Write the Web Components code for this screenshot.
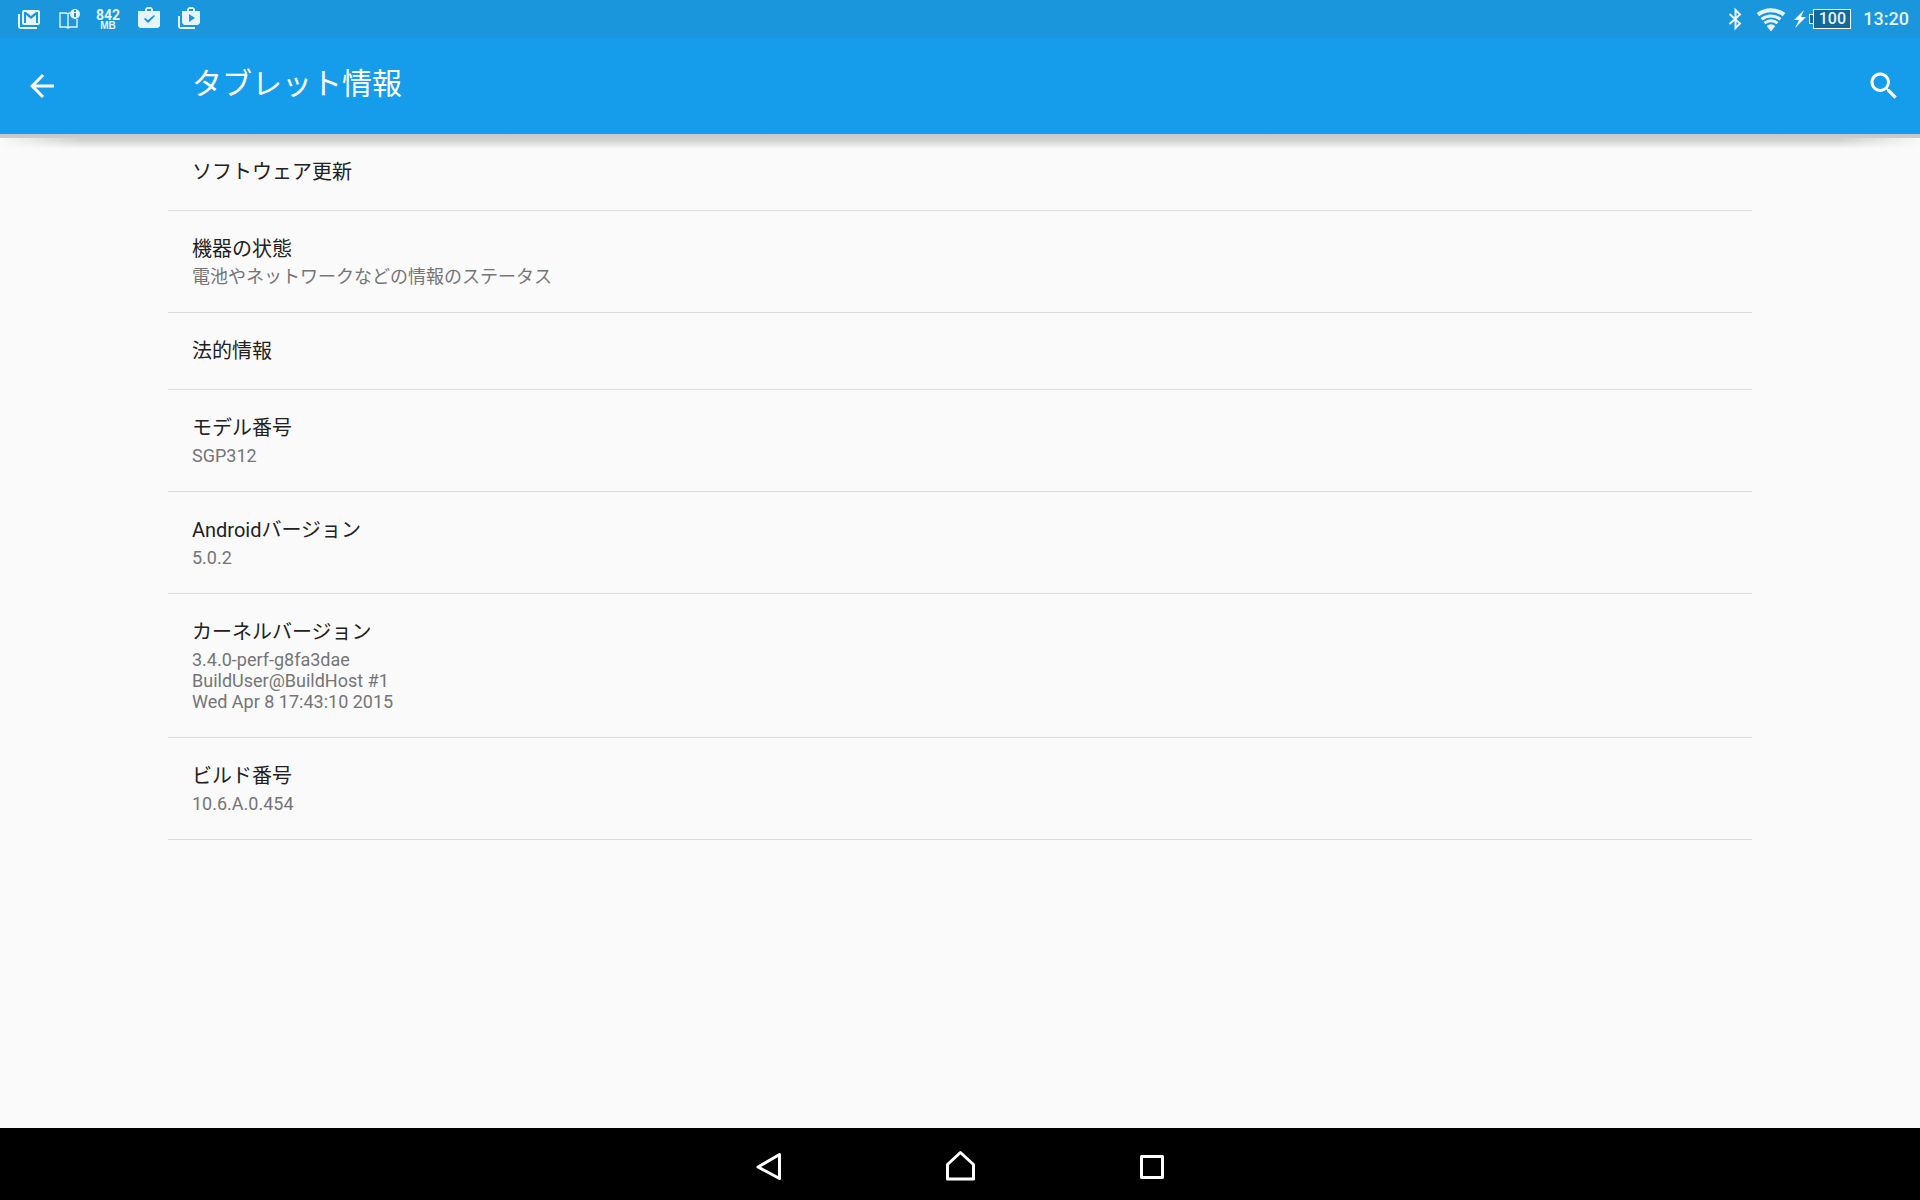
<!DOCTYPE html>
<html lang="ja">
<head>
<meta charset="utf-8">
<meta name="viewport" content="width=device-width, initial-scale=1">
<title>タブレット情報</title>
<style>
    body {
        margin: 0;
        background: #fafafa;
        font-family: Roboto, "Noto Sans CJK JP", sans-serif;
    }
</style>
</head>
<body>
<about-screen>
    <status-bar slot="status" time="13:20" battery="100" traffic="842"></status-bar>
    <app-bar slot="header">タブレット情報</app-bar>

    <setting-row>ソフトウェア更新</setting-row>
    <setting-row>機器の状態<span slot="summary">電池やネットワークなどの情報のステータス</span></setting-row>
    <setting-row>法的情報</setting-row>
    <setting-row>モデル番号<span slot="summary">SGP312</span></setting-row>
    <setting-row>Androidバージョン<span slot="summary">5.0.2</span></setting-row>
    <setting-row>カーネルバージョン<span slot="summary">3.4.0-perf-g8fa3dae<br>BuildUser@BuildHost #1<br>Wed Apr 8 17:43:10 2015</span></setting-row>
    <setting-row>ビルド番号<span slot="summary">10.6.A.0.454</span></setting-row>

    <nav-bar slot="nav"></nav-bar>
</about-screen>

<script>
function makeTemplate(html) {
    const template = document.createElement("template");
    template.innerHTML = html;
    return template;
}

const screenTemplate = makeTemplate(`
    <style>
        :host {
            display: flex;
            flex-direction: column;
            min-height: 100vh;
        }

        main {
            flex: 1;
            padding: 0 168px;
        }
    </style>

    <slot name="status"></slot>
    <slot name="header"></slot>
    <main><slot></slot></main>
    <slot name="nav"></slot>
`);

class AboutScreen extends HTMLElement {
    constructor() {
        super();
        this.attachShadow({ mode: "open" });
        this.shadowRoot.appendChild(screenTemplate.content.cloneNode(true));
    }
}

const statusTemplate = makeTemplate(`
    <style>
        :host {
            display: flex;
            justify-content: space-between;
            align-items: center;
            box-sizing: border-box;
            height: 38px;
            padding: 0 11px 0 16px;
            background: #1a96dc;
            color: #e8f4fc;
        }

        .group {
            display: flex;
            align-items: center;
        }

        .notifications {
            gap: 16px;
        }

        svg {
            display: block;
            fill: currentColor;
        }

        .traffic {
            width: 24px;
            display: flex;
            flex-direction: column;
            align-items: center;
            font: bold 14px/12px Roboto, sans-serif;
        }

        .traffic small {
            font: bold 10px/9px "Liberation Sans", sans-serif;
        }

        .wifi {
            margin: 0 7px 0 14px;
        }

        .bolt {
            margin-right: 2px;
        }

        .battery {
            display: flex;
            align-items: center;
        }

        .cap {
            width: 3px;
            height: 8px;
            border: 1px solid #fff;
            border-right: 0;
            background: #13699a;
        }

        .level {
            box-sizing: border-box;
            width: 38px;
            height: 20px;
            border: 1px solid #fff;
            background: #13699a;
            font-size: 16px;
            font-weight: 500;
            line-height: 18px;
            text-align: center;
        }

        time {
            margin-left: 12px;
            font-size: 18px;
            font-weight: 500;
            line-height: 24px;
        }
    </style>

    <div class="group notifications">
        <svg width="24" height="24" viewBox="0 1 24 24" aria-hidden="true">
            <path d="M2 8v12a3 3 0 0 0 3 3h16v-2H4V8z"/>
            <path fill-rule="evenodd" d="M8 4h14a2 2 0 0 1 2 2v11a2 2 0 0 1-2 2H8a2 2 0 0 1-2-2V6a2 2 0 0 1 2-2zm0 2v11h2V9l5 4 5-4v8h2V6h-2l-5 4-5-4z"/>
        </svg>
        <svg width="24" height="24" viewBox="-2 1 24 24" aria-hidden="true">
            <path d="M12 7h-1l-1 1-2-1H2v14h6l2 1 2-1h7v-8M10 8v13" fill="none" stroke="currentColor" stroke-width="1.4"/>
            <circle cx="17" cy="8" r="5"/>
            <path d="M16 4h2v2h-2zM16 7h2v4h-2z" fill="#1a96dc"/>
        </svg>
        <div class="traffic"><span></span><small>MB</small></div>
        <svg width="24" height="24" viewBox="-1 1 24 24" aria-hidden="true">
            <path fill-rule="evenodd" d="M8 5V3l2-2h4l2 2v2h7v15l-2 2H3l-2-2V5zm2 0h4V3h-4zm-3 8 4 4 7-7-1-1-6 5-3-2z"/>
        </svg>
        <svg width="24" height="24" viewBox="-1 1 24 24" aria-hidden="true">
            <path d="M1 10v10a3 3 0 0 0 3 3h14v-2H3V10z"/>
            <path fill-rule="evenodd" d="M10 5V3l2-2h4l2 2v2h5v12l-2 2H7l-2-2V5zm2 0h4V3h-4zm0 3v8l6-4z"/>
        </svg>
    </div>

    <div class="group">
        <svg width="14" height="24" viewBox="0 0 14 24" aria-hidden="true">
            <path d="M1.500 7 12 16.500 7.500 21V3L12 7.500 1.500 17" fill="none" stroke="currentColor" stroke-width="2"/>
        </svg>
        <svg class="wifi" width="30" height="26" viewBox="0 0 30 26" aria-hidden="true">
            <path d="M1.900 8.700a21.300 21.300 0 0 1 26.200 0" fill="none" stroke="currentColor" stroke-width="4"/>
            <path d="M5.500 13.300a15.500 15.500 0 0 1 19 0M8.500 17.100a10.600 10.600 0 0 1 13 0" fill="none" stroke="currentColor" stroke-width="3"/>
            <path d="M10.700 20a7 7 0 0 1 8.600 0L15 25.500z"/>
        </svg>
        <svg class="bolt" width="14" height="20" viewBox="0 0 14 20" aria-hidden="true">
            <path fill="#fff" d="M11 1 1 11h5l-4 8L13 8H8z"/>
        </svg>
        <div class="battery"><span class="cap"></span><span class="level"></span></div>
        <time></time>
    </div>
`);

class StatusBar extends HTMLElement {
    constructor() {
        super();
        this.attachShadow({ mode: "open" });
        this.shadowRoot.appendChild(statusTemplate.content.cloneNode(true));
    }

    connectedCallback() {
        this.shadowRoot.querySelector(".traffic span").textContent = this.getAttribute("traffic");
        this.shadowRoot.querySelector(".level").textContent = this.getAttribute("battery");
        this.shadowRoot.querySelector("time").textContent = this.getAttribute("time");
    }
}

const appBarTemplate = makeTemplate(`
    <style>
        :host {
            display: flex;
            align-items: center;
            position: relative;
            height: 96px;
            background: #159deb;
            color: #fff;
        }

        /* drop shadow, thinner towards both window edges */
        :host::before,
        :host::after {
            content: "";
            position: absolute;
            top: 100%;
            left: 0;
            right: 0;
            height: 4px;
            background: linear-gradient(#c6c6c6, #cdcdcd);
            pointer-events: none;
        }

        :host::after {
            height: 15px;
            background: linear-gradient(#c6c6c6, #d4d4d4 45%, #fafafa);
            mask-image: linear-gradient(90deg, transparent, #000 80px, #000 calc(100% - 80px), transparent);
        }

        button {
            display: flex;
            align-items: center;
            justify-content: center;
            width: 84px;
            height: 96px;
            padding: 0;
            border: 0;
            background: none;
            color: inherit;
        }

        .search {
            width: 72px;
        }

        h1 {
            flex: 1;
            margin: 0 0 0 108px;
            padding-bottom: 4px;
            font-size: 30px;
            font-weight: 400;
            line-height: 40px;
        }
    </style>

    <button class="back" type="button" aria-label="戻る">
        <svg width="36" height="36" viewBox="0 0 24 24" aria-hidden="true">
            <path fill="currentColor" d="M20 11H7.8l5.6-5.6L12 4l-8 8 8 8 1.4-1.4L7.8 13H20z"/>
        </svg>
    </button>
    <h1><slot></slot></h1>
    <button class="search" type="button" aria-label="検索">
        <svg width="36" height="36" viewBox="0 0 24 24" aria-hidden="true">
            <path fill="currentColor" d="M15.5 14h-.8l-.3-.3A6.5 6.5 0 1 0 13.7 14.4l.3.3v.8l5 5 1.5-1.5zm-6 0a4.5 4.5 0 1 1 0-9 4.5 4.5 0 0 1 0 9z"/>
        </svg>
    </button>
`);

class AppBar extends HTMLElement {
    constructor() {
        super();
        this.attachShadow({ mode: "open" });
        this.shadowRoot.appendChild(appBarTemplate.content.cloneNode(true));
    }
}

const rowTemplate = makeTemplate(`
    <style>
        :host {
            display: block;
            padding: 24px;
            border-bottom: 1px solid #dcdcdc;
        }

        .title {
            color: #212121;
            font-size: 20px;
            line-height: 28px;
        }

        ::slotted([slot="summary"]) {
            display: block;
            padding: 3px 0 1px;
            color: #757575;
            font-size: 18px;
            line-height: 21px;
        }
    </style>

    <div class="title"><slot></slot></div>
    <slot name="summary"></slot>
`);

class SettingRow extends HTMLElement {
    constructor() {
        super();
        this.attachShadow({ mode: "open" });
        this.shadowRoot.appendChild(rowTemplate.content.cloneNode(true));
    }
}

const navTemplate = makeTemplate(`
    <style>
        :host {
            display: flex;
            justify-content: center;
            height: 72px;
            background: #000;
        }

        button {
            display: flex;
            align-items: center;
            justify-content: center;
            width: 192px;
            padding: 0;
            border: 0;
            background: none;
        }

        svg {
            fill: none;
            stroke: #fff;
            stroke-width: 3;
            stroke-linejoin: round;
        }
    </style>

    <button type="button" aria-label="戻る">
        <svg width="36" height="36" viewBox="0 0 36 36" aria-hidden="true"><path d="M29.5 8.500v24L8 21z"/></svg>
    </button>
    <button type="button" aria-label="ホーム">
        <svg width="36" height="36" viewBox="0 0 36 36" aria-hidden="true"><path d="M18.400 6.500 31.500 18.500V33h-26V18.500z"/></svg>
    </button>
    <button type="button" aria-label="最近使ったアプリ">
        <svg width="36" height="36" viewBox="0 0 36 36" aria-hidden="true"><path d="M7.500 10.500h21v21h-21z"/></svg>
    </button>
`);

class NavBar extends HTMLElement {
    constructor() {
        super();
        this.attachShadow({ mode: "open" });
        this.shadowRoot.appendChild(navTemplate.content.cloneNode(true));
    }
}

customElements.define("about-screen", AboutScreen);
customElements.define("status-bar", StatusBar);
customElements.define("app-bar", AppBar);
customElements.define("setting-row", SettingRow);
customElements.define("nav-bar", NavBar);
</script>
</body>
</html>
